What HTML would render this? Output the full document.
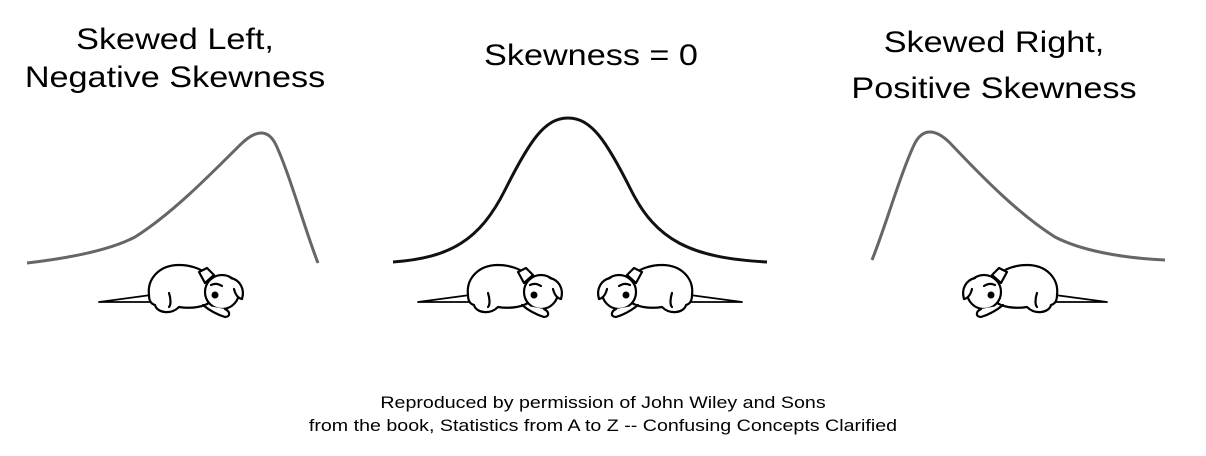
<!DOCTYPE html><html><head><style>
body{margin:0;background:#fff;width:1206px;height:456px;overflow:hidden;position:relative;font-family:"Liberation Sans",Arial,sans-serif}
.t{position:absolute;font-size:30px;color:#000;text-align:center;line-height:38px;white-space:nowrap;transform:scaleX(1.14)}
.b{position:absolute;left:0;width:1206px;text-align:center;font-size:16.5px;line-height:23px;top:392px;transform:scaleX(1.19)}
</style></head><body>
<div class="t" style="left:0;width:350px;top:21px">Skewed Left,<br>Negative Skewness</div>
<div class="t" style="left:441px;width:300px;top:37px">Skewness = 0</div>
<div class="t" style="left:844px;width:300px;top:20px;line-height:46px">Skewed Right,<br>Positive Skewness</div>
<div class="b">Reproduced by permission of John Wiley and Sons<br>from the book, Statistics from A to Z -- Confusing Concepts Clarified</div>
<svg width="1206" height="456" style="position:absolute;left:0;top:0">
<defs><g id="dog" fill="#fff" stroke="#000" stroke-width="2.2" stroke-linejoin="round" stroke-linecap="round">
<path d="M8,49 L60,42 M8,49 L62,49" fill="none" stroke-width="1.8"/>
<path d="M58,42 C56,26 68,12 88,12 C100,12 110,16 116,21 L124,28 L120,48 C115,54 100,56 88,54 C80,62 66,60 64,52 C60,51 58,48 58,42 Z"/>
<path d="M78,40 C80,46 80,52 78,54"/>
<path d="M108,19 L116,15 L123,22 L114,30 Z"/>
<circle cx="131" cy="39" r="17"/>
<path d="M140,25 C149,27 154,36 151,46 C146,45 144,40 143,36"/>
<path d="M112,52 C118,57 124,61 134,64 C139,64 140,59 134,56"/>
<path d="M120,32 C124,30 128,31 131,33"/>
<circle cx="124" cy="42" r="2.4" fill="#000"/>
</g></defs>
<path d="M27,263 C70,258 110,250 135,237 C170,215 205,180 240,145 C255,130 268,128 276,145 C290,175 305,230 318,263" fill="none" stroke="#666" stroke-width="3"/>
<path d="M393,262 C450,258 480,240 505,190 C530,140 545,118 568,118 C591,118 606,140 631,190 C656,240 690,258 767,262" fill="none" stroke="#111" stroke-width="3"/>
<path d="M872,260 C885,228 900,175 914,145 C922,128 935,128 950,143 C985,180 1020,215 1055,237 C1080,250 1120,258 1165,260" fill="none" stroke="#666" stroke-width="3"/>
<use href="#dog" transform="translate(91,253)"/>
<use href="#dog" transform="translate(410,253)"/>
<use href="#dog" transform="translate(750,253) scale(-1,1)"/>
<use href="#dog" transform="translate(1115,253) scale(-1,1)"/>
</svg>
</body></html>
